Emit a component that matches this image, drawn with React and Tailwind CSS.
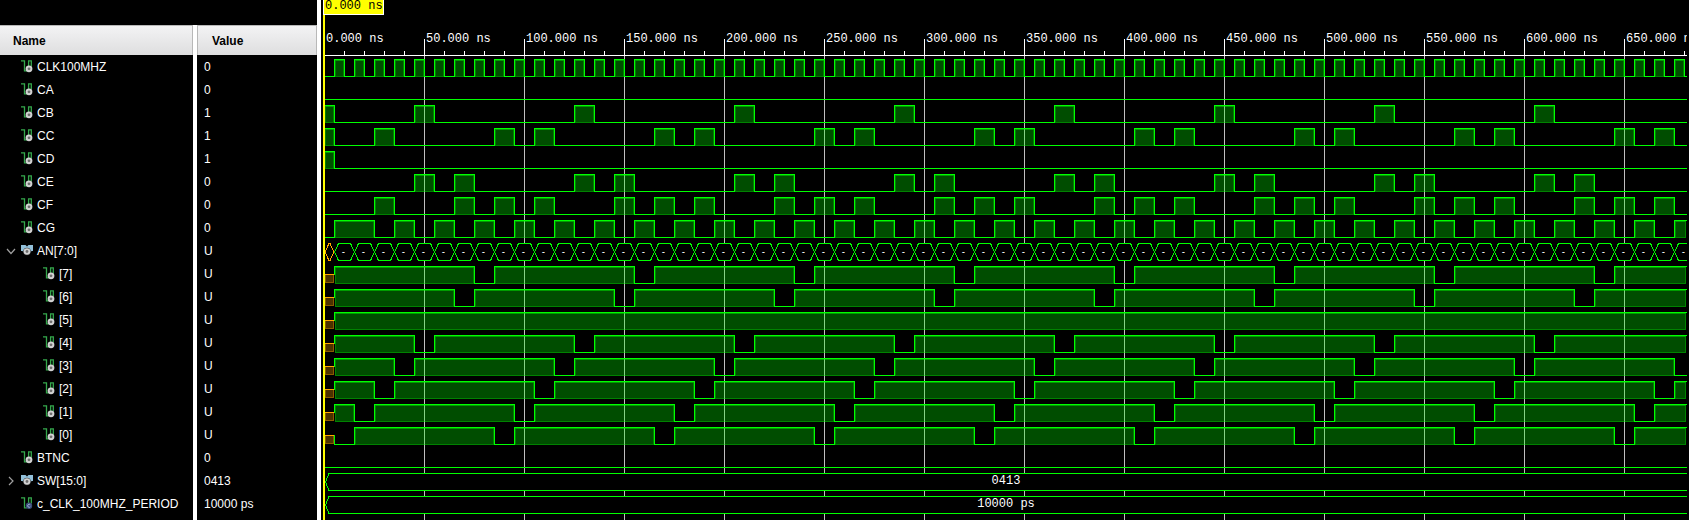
import React, { useLayoutEffect, useRef, useState } from "react";

const PX_PER_NS = 2;
const ROW = 23;
const FIRST_TOP = 59;
const WAVE_H = 17;
const AXIS_Y = 55;

const GREEN = "#00ff00";
const MONO = '"Liberation Mono", "Courier New", monospace';

const xOf = (t) => 1 + PX_PER_NS * t;

// The display multiplexer advances every 10 ns, starting at 5 ns.
const slotted = (initial, fn) => (end) => {
  const out = [{ a: 0, b: 5, v: initial }];
  for (let k = 0; 5 + 10 * k < end; k++) {
    const v = fn(k) ? 1 : 0;
    const last = out[out.length - 1];
    const b = Math.min(end, 15 + 10 * k);
    if (last.v === v) last.b = b;
    else out.push({ a: 5 + 10 * k, b, v });
  }
  return out;
};

const clock = (end) => {
  const out = [];
  for (let t = 0; t < end; t += 5) out.push({ a: t, b: Math.min(end, t + 5), v: (t / 5) % 2 });
  return out;
};

const constant = (v) => (end) => [{ a: 0, b: end, v }];

const SIGNALS = [
  { name: "CLK100MHZ", value: "0", wave: clock },
  { name: "CA", value: "0", wave: constant(0) },
  { name: "CB", value: "1", wave: slotted(1, (k) => k % 8 === 4) },
  { name: "CC", value: "1", wave: slotted(1, (k) => k > 0 && [0, 2].includes(k % 8)) },
  { name: "CD", value: "1", wave: slotted(1, () => false) },
  { name: "CE", value: "0", wave: slotted(0, (k) => [4, 6].includes(k % 8)) },
  { name: "CF", value: "0", wave: slotted(0, (k) => k > 0 && [0, 2, 6].includes(k % 8)) },
  { name: "CG", value: "0", wave: slotted(0, (k) => k === 0 || k % 2 === 1) },
  {
    name: "AN[7:0]",
    value: "U",
    bus: "changing",
    children: [7, 6, 5, 4, 3, 2, 1, 0].map((n) => ({
      name: `[${n}]`,
      value: "U",
      wave: slotted("U", (k) => n === 5 || k % 8 !== n),
    })),
  },
  { name: "BTNC", value: "0", wave: constant(0) },
  {
    name: "SW[15:0]",
    value: "0413",
    bus: "steady",
    children: Array.from({ length: 16 }, (_, i) => 15 - i).map((n) => ({
      name: `[${n}]`,
      value: String((0x0413 >> n) & 1),
      wave: constant((0x0413 >> n) & 1),
    })),
  },
  { name: "c_CLK_100MHZ_PERIOD", value: "10000 ps", bus: "steady", isConstant: true },
];

function ScalarIcon({ isConstant }) {
  return (
    <svg width="12" height="13" viewBox="0 0 12 13" aria-hidden="true">
      <path d="M0 0.8H3.5V10.8H6M7.6 6V0.8H10.3V6.5" fill="none" stroke="#35a84c" strokeWidth="1.3" />
      {isConstant ? (
        <>
          <circle cx="8" cy="8.8" r="3.2" fill="#3d4f7c" />
          <path d="M9.3 7.8A1.5 1.5 0 1 0 9.3 9.8" fill="none" stroke="#9fb0d8" />
        </>
      ) : (
        <>
          <circle cx="8" cy="8.8" r="3.4" fill="#d2d2d2" />
          <circle cx="8" cy="8.8" r="1.4" fill="#6e6e6e" />
        </>
      )}
    </svg>
  );
}

function BusIcon() {
  return (
    <svg width="12" height="13" viewBox="0 0 12 13" aria-hidden="true">
      <path d="M0 1H4.5L6 2.5L7.5 1H12V7H10.5L9 9H3L1.5 7H0Z" fill="#93c0da" />
      <circle cx="6" cy="7.5" r="3.8" fill="#333" />
      <circle cx="6" cy="7.5" r="3.3" fill="#d2d2d2" />
      <circle cx="6" cy="7.5" r="1.4" fill="#6e6e6e" />
    </svg>
  );
}

function Chevron({ open }) {
  return (
    <svg width="10" height="10" viewBox="0 0 10 10" aria-hidden="true">
      <path d={open ? "M1 3L5 7.5L9 3" : "M3 1L7 5L3 9"} fill="none" stroke="#a0a0a0" strokeWidth="1.2" />
    </svg>
  );
}

function LevelWave({ top, segments, end }) {
  const bottom = top + WAVE_H;
  const shapes = [];
  let d = "";
  segments.forEach(({ a, b, v }, i) => {
    const x0 = xOf(a);
    const x1 = xOf(b);
    if (v === "U") {
      shapes.push(
        <g key={i}>
          <rect x={x0 + 1} y={top + 9} width={x1 - x0 - 1} height={8} fill="#4c3200" />
          <path
            d={`M${x0 + 1.5} ${top + 9}V${top + 16.5}H${x1 - 0.5}V${top + 9}`}
            fill="none"
            stroke="#8a5a00"
          />
          <path d={`M${x0 + 1} ${top + 8.5}H${x1}`} stroke="#ffa500" />
        </g>
      );
      d += `M${x1 + 0.5} ${top + 8.5}`;
      return;
    }
    if (v === 1) {
      shapes.push(
        <g key={i}>
          <rect x={x0 + 1} y={top + 1} width={x1 - x0 - 1} height={WAVE_H} fill={GREEN} fillOpacity="0.3" />
          <path
            d={`M${x0 + 1.5} ${top + 2}V${bottom + 0.5}H${x1 - 0.5}V${top + 2}`}
            fill="none"
            stroke={GREEN}
            strokeOpacity="0.3"
          />
          <path d={`M${x0 + 1} ${top + 1.5}H${x1}`} stroke={GREEN} strokeOpacity="0.45" />
        </g>
      );
    }
    const y = (v === 1 ? top : bottom) + 0.5;
    if (i === 0) d += `M${x0 + 1} ${y}`;
    else d += `V${y}`;
    d += `H${b >= end ? x1 + 1 : x1 + 0.5}`;
  });
  return (
    <g shapeRendering="crispEdges">
      {shapes}
      <path d={d} fill="none" stroke={GREEN} strokeLinecap="square" strokeLinejoin="miter" />
    </g>
  );
}

function hexagon(x0, x1, top, slope) {
  const y0 = top + 0.5;
  const y1 = top + WAVE_H + 0.5;
  const mid = (y0 + y1) / 2;
  return `M${x0} ${mid}L${x0 + slope} ${y0}H${x1 - slope}L${x1} ${mid}L${x1 - slope} ${y1}H${x0 + slope}Z`;
}

function ChangingBus({ top, end }) {
  const cells = [];
  for (let t = 5; t < end; t += 10) {
    const x0 = xOf(t) + 0.5;
    cells.push(
      <g key={t}>
        <path
          d={hexagon(x0, x0 + 20, top, 4)}
          fill="#000"
          stroke={GREEN}
          shapeRendering="crispEdges"
        />
        <text
          x={x0 + 9}
          y={top + 11}
          fontSize="8"
          fontWeight="bold"
          fill="#fff"
          textAnchor="middle"
          fontFamily={MONO}
        >
          -
        </text>
      </g>
    );
  }
  return (
    <g>
      <path d={hexagon(2, 11, top, 4)} fill="#000" stroke="#ffa500" shapeRendering="crispEdges" />
      {cells}
    </g>
  );
}

function SteadyBus({ top, width, label }) {
  const y0 = top + 0.5;
  const y1 = top + WAVE_H + 0.5;
  return (
    <g>
      <path
        d={`M${width} ${y0}H6L2.5 ${(y0 + y1) / 2}L6 ${y1}H${width}`}
        fill="#000"
        stroke={GREEN}
        shapeRendering="crispEdges"
      />
      <text x={width / 2 + 1} y={top + 11} fontSize="12" fill="#fff" textAnchor="middle" fontFamily={MONO}>
        {label}
      </text>
    </g>
  );
}

function WaveView({ rows }) {
  const ref = useRef(null);
  const [width, setWidth] = useState(0);

  useLayoutEffect(() => {
    const measure = () => setWidth(ref.current.clientWidth);
    measure();
    const observer = new ResizeObserver(measure);
    observer.observe(ref.current);
    return () => observer.disconnect();
  }, []);

  const end = Math.max(0, (width - 2) / PX_PER_NS);
  const ticks = [];
  for (let t = 0; t <= end; t += 10) ticks.push(t);
  const height = FIRST_TOP + ROW * rows.length + 1;

  return (
    <div ref={ref} className="min-w-0 flex-1 overflow-hidden">
      <svg width={width} height={height} className="block" role="img" aria-label="Waveforms">
        <g shapeRendering="crispEdges">
          {ticks.map((t) =>
            t % 50 === 0 ? (
              <g key={t}>
                <rect x={xOf(t)} y={39} width={1} height={AXIS_Y - 39} fill="#fff" />
                <rect x={xOf(t)} y={AXIS_Y} width={1} height={height - AXIS_Y} fill="#c0c0c0" />
              </g>
            ) : (
              <rect key={t} x={xOf(t)} y={51} width={1} height={4} fill="#fff" />
            )
          )}
          <rect x={0} y={AXIS_Y} width={width} height={1} fill="#fff" />
        </g>
        {ticks
          .filter((t) => t % 50 === 0)
          .map((t) => (
            <text key={t} x={xOf(t) + 2} y={42} fontSize="12" fill="#fff" fontFamily={MONO}>
              {t.toFixed(3)} ns
            </text>
          ))}
        {width > 0 &&
          rows.map((row, i) => {
            const top = FIRST_TOP + ROW * i;
            if (row.bus === "changing") return <ChangingBus key={row.id} top={top} end={end} />;
            if (row.bus === "steady")
              return <SteadyBus key={row.id} top={top} width={width} label={row.value} />;
            return <LevelWave key={row.id} top={top} segments={row.wave(end)} end={end} />;
          })}
        <g shapeRendering="crispEdges">
          <rect x={0} y={0} width={2} height={height} fill="#ffff00" />
          <rect x={0} y={0} width={61} height={15} fill="#fff" />
          <rect x={1} y={0} width={59} height={14} fill="#ffff00" />
        </g>
        <text x={2} y={9} fontSize="12" fill="#000" fontFamily={MONO}>
          0.000 ns
        </text>
      </svg>
    </div>
  );
}

export default function App() {
  const [open, setOpen] = useState({ "AN[7:0]": true });

  const rows = SIGNALS.flatMap((s) => [
    { ...s, id: s.name, depth: 0 },
    ...(s.children && open[s.name]
      ? s.children.map((c) => ({ ...c, id: s.name + c.name, depth: 1 }))
      : []),
  ]);

  return (
    <main className="flex min-h-screen overflow-hidden bg-black font-['Liberation_Sans',Arial,sans-serif] text-xs text-white">
      <section className="flex w-[321px] shrink-0 flex-col border-r-4 border-white pt-[25px]">
        <table className="w-full table-fixed border-separate border-spacing-0">
          <thead>
            <tr className="h-[30px] text-left text-black">
              <th className="w-[197px] border-r-4 border-white p-0">
                <div className="flex h-[30px] items-center border-t border-r border-[#b8b8b8] bg-linear-to-b from-[#f3f3f4] to-[#dededf] pl-[13px]">
                  Name
                </div>
              </th>
              <th className="p-0">
                <div className="flex h-[30px] items-center border-x border-t border-[#b8b8b8] bg-linear-to-b from-[#f3f3f4] to-[#dededf] pl-[14px]">
                  Value
                </div>
              </th>
            </tr>
          </thead>
          <tbody>
            {rows.map((row) => (
              <tr key={row.id} className="h-[23px]">
                <td className="border-r-4 border-white p-0">
                  <div className={`flex h-[23px] items-center whitespace-nowrap ${row.depth ? "pl-[27px]" : "pl-[5px]"}`}>
                    {row.children ? (
                      <button
                        type="button"
                        aria-label={`Toggle ${row.name}`}
                        aria-expanded={!!open[row.name]}
                        onClick={() => setOpen({ ...open, [row.name]: !open[row.name] })}
                        className="mr-1 flex w-3 justify-center"
                      >
                        <Chevron open={open[row.name]} />
                      </button>
                    ) : (
                      <span className="mr-1 w-3" />
                    )}
                    {row.children ? <BusIcon /> : <ScalarIcon isConstant={row.isConstant} />}
                    <span className="pl-1">{row.name}</span>
                  </div>
                </td>
                <td className="p-0 pl-[7px]">{row.value}</td>
              </tr>
            ))}
          </tbody>
        </table>
        <div className="w-[197px] flex-1 border-r-4 border-white" />
      </section>
      <section className="flex min-w-0 flex-1 px-0.5">
        <WaveView rows={rows} />
      </section>
    </main>
  );
}
